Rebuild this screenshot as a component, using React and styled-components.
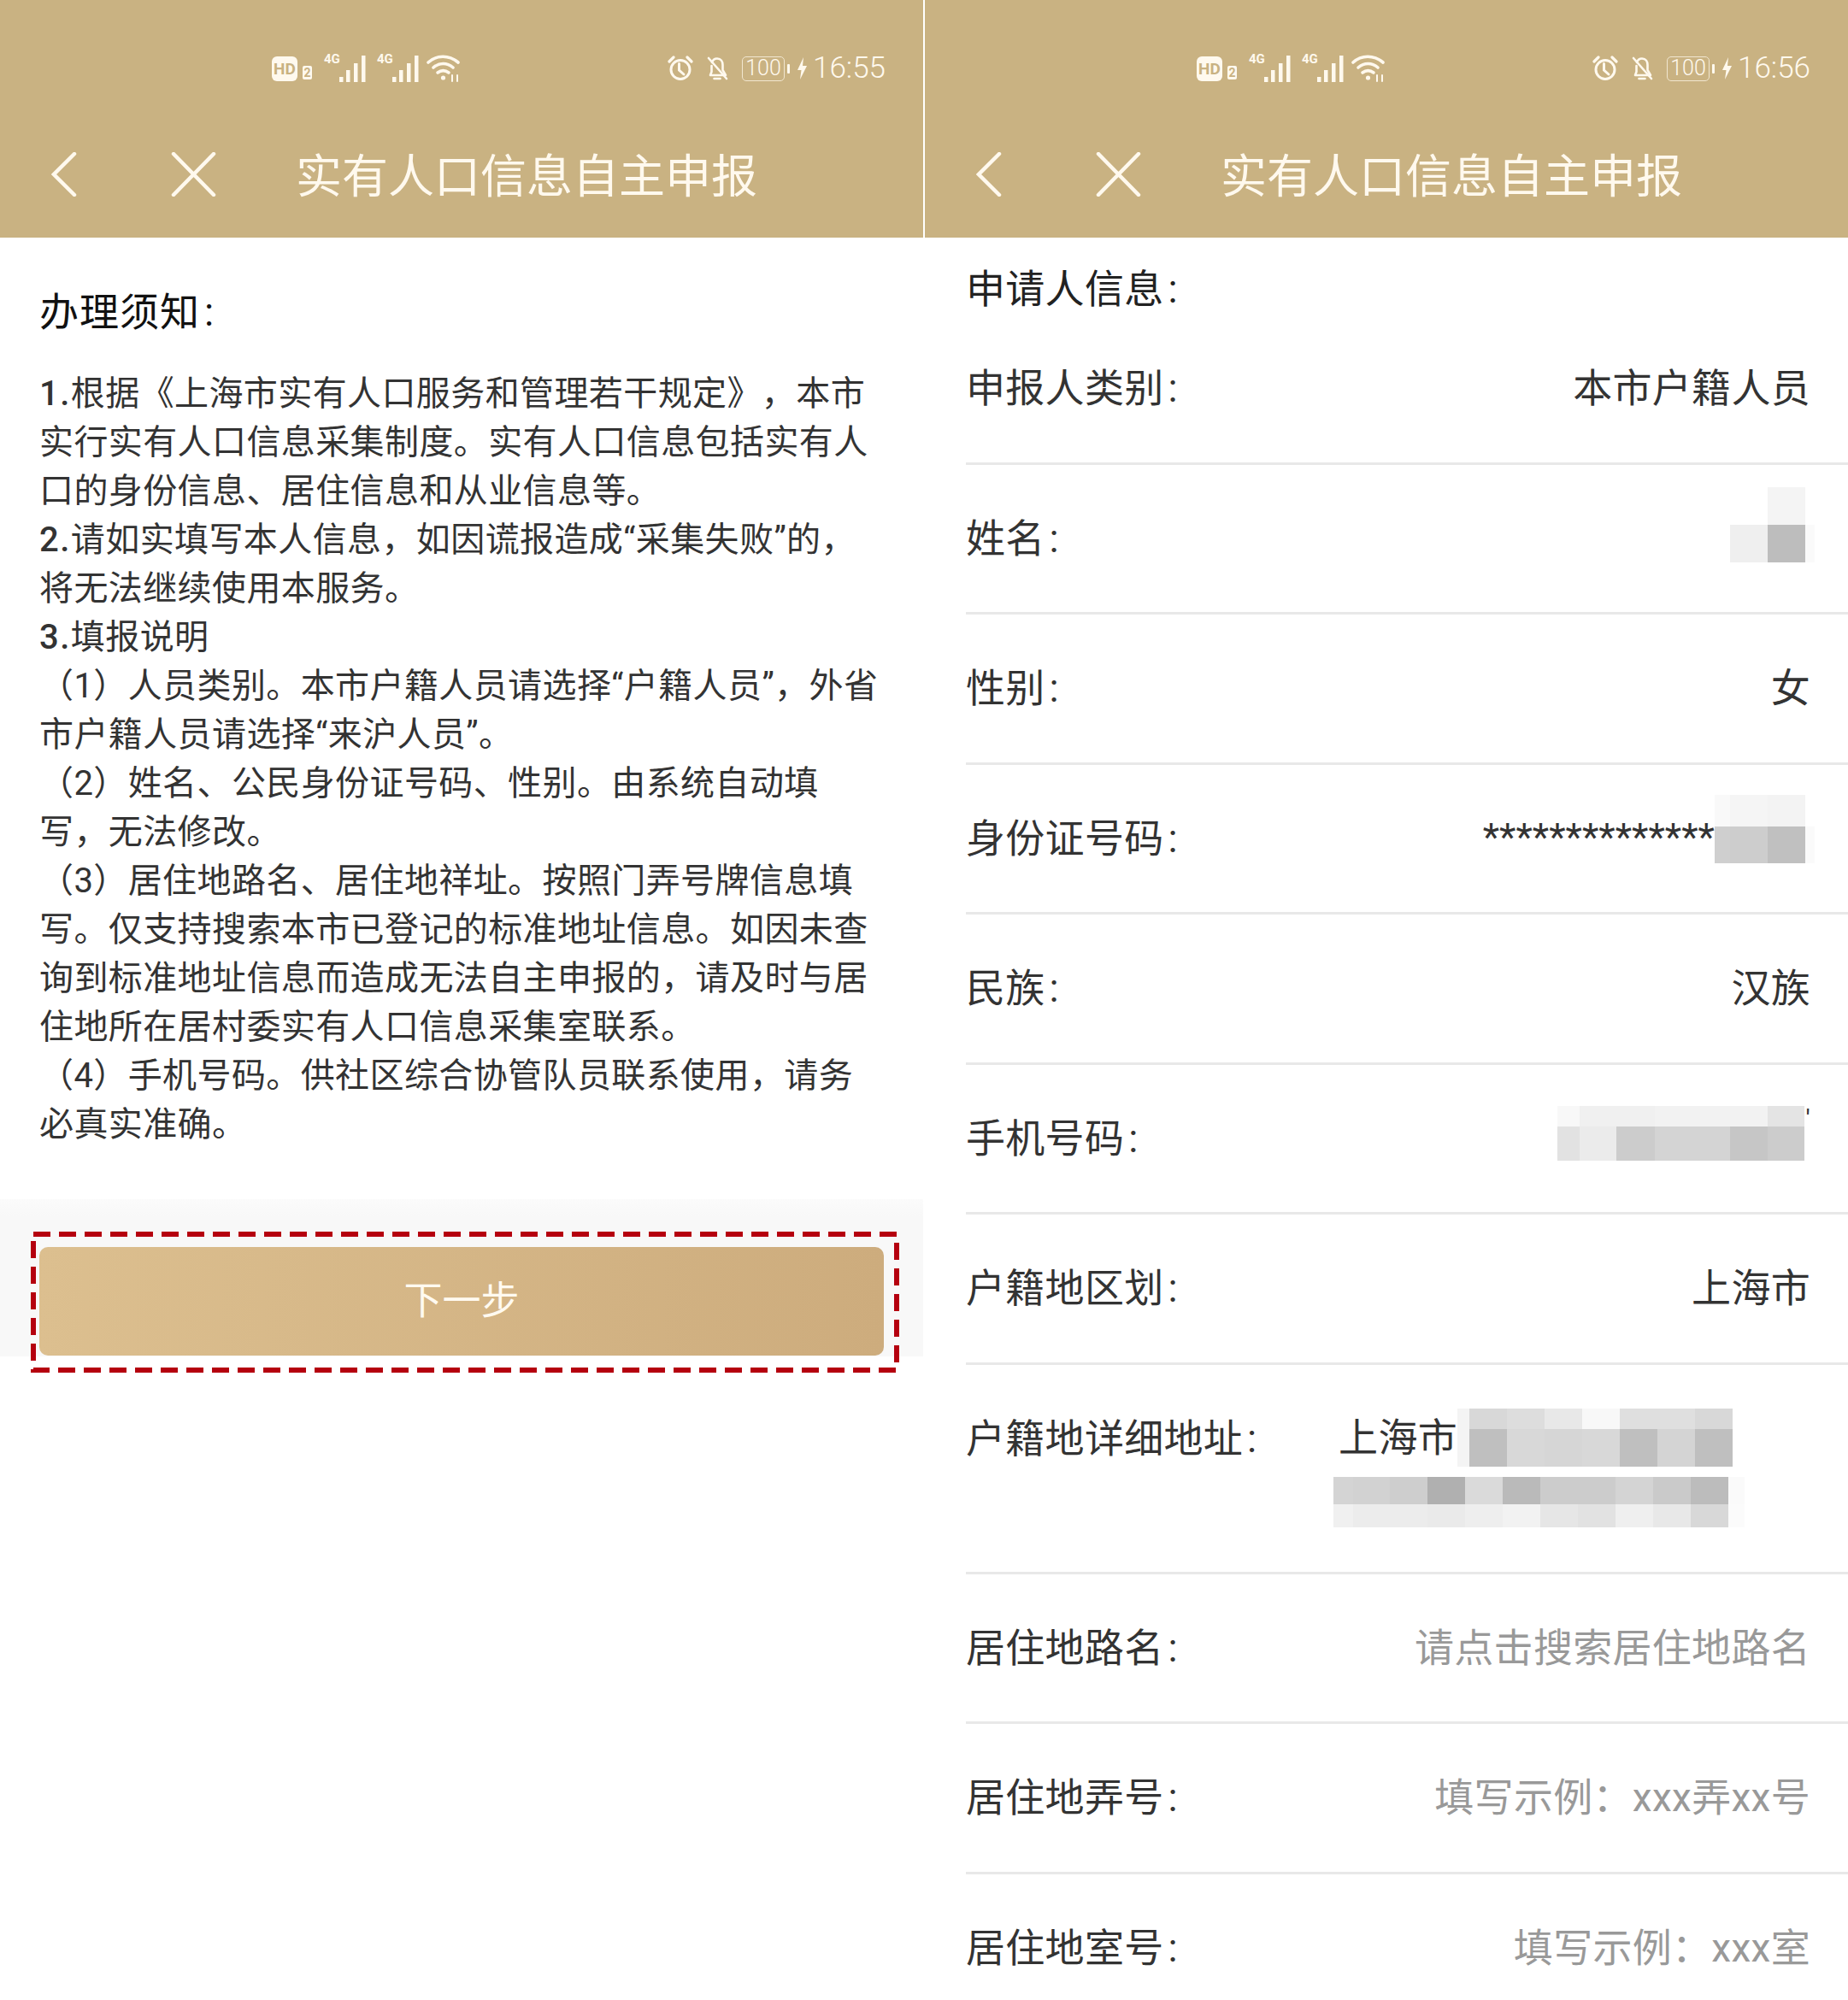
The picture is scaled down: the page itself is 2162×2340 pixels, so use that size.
import React from 'react'
import styled, { createGlobalStyle } from 'styled-components'

const GlobalStyle = createGlobalStyle`
html, body {
  margin: 0;
  padding: 0;
  background: #fff;
}
body {
  font-family: Roboto, "Noto Sans CJK SC", sans-serif;
  text-spacing-trim: space-all;
}
`

const Page = styled.div`
width: 2162px;
height: 2340px;
overflow: hidden;
display: flex;
gap: 2px;
background: #fff;
`

const Panel = styled.div`
width: 1080px;
height: 2340px;
display: flex;
flex-direction: column;
position: relative;
background: #fff;
`

const Header = styled.div`
height: 278px;
flex: none;
background: #c9b282;
color: #fff9ee;
display: flex;
flex-direction: column;
`

const StatusBar = styled.div`
height: 100px;
padding: 30px 44px 0 318px;
display: flex;
align-items: center;
justify-content: space-between;
`

const StatusGroup = styled.div`
display: flex;
align-items: center;
`

const HdBadge = styled.span`
width: 30px;
height: 29px;
border-radius: 6px;
background: #fff9ee;
color: #c9b282;
font: 700 19px/29px Roboto, sans-serif;
text-align: center;
`

const SimBadge = styled.span`
width: 11px;
height: 16px;
margin: 9px 14px 0 6px;
border-radius: 2px;
background: #fff9ee;
color: #c9b282;
font: 700 14px/16px Roboto, sans-serif;
text-align: center;
`

const Signal = styled.div`
position: relative;
width: 50px;
height: 32px;
margin-right: 12px;
display: flex;
justify-content: flex-end;
&:last-of-type {
  margin-right: 8px;
}
`

const NetLabel = styled.span`
position: absolute;
left: 0;
top: -3px;
font: 700 15px/16px Roboto, sans-serif;
`

const Battery = styled.div`
width: 50px;
height: 29px;
box-sizing: border-box;
margin-left: 14px;
border: 1.5px solid #f1e6cf;
border-radius: 5px;
font: 300 25px/26px Roboto, sans-serif;
text-align: center;
`

const BatteryNub = styled.span`
width: 3px;
height: 11px;
margin: 0 9px 0 3px;
border-radius: 1px;
background: #fff9ee;
`

const Time = styled.span`
margin-left: 7px;
font: 300 35px/40px Roboto, sans-serif;
`

const NavBar = styled.div`
height: 148px;
padding-left: 60px;
display: flex;
align-items: center;
`

const NavIcon = styled.svg`
display: block;
flex: none;
margin-right: ${({ $gap }) => $gap}px;
`

const Title = styled.div`
margin-top: 8px;
font-size: 54px;
line-height: 64px;
`

const Colon = styled.span`
margin-left: 5px;
`

const NoticeTitle = styled.div`
margin: 62px 0 0 46px;
font-size: 46px;
letter-spacing: 1px;
line-height: 50px;
color: #111;
`

const NoticeBody = styled.div`
margin: 42px 0 0 46px;
font-size: 40px;
letter-spacing: 0.4px;
line-height: 57px;
color: #333;
white-space: nowrap;
`

const NoticeLine = styled.div`
height: 57px;
`

const NoticeNumber = styled.span`
font-weight: 500;
letter-spacing: 1.5px;
`

const ActionZone = styled.div`
margin-top: 59px;
padding: 56px 46px 1px;
background: linear-gradient(#fbfbfb, #f8f8f8 20px);
position: relative;
`

const NextButton = styled.div`
height: 127px;
padding-bottom: 8px;
box-sizing: border-box;
border-radius: 10px;
background: linear-gradient(90deg, #dcbf8f, #cdac7d);
color: #fffaf0;
font-size: 45px;
display: flex;
align-items: center;
justify-content: center;
`

const Annotation = styled.svg`
position: absolute;
left: 36px;
top: 38px;
`

const SectionTitle = styled.div`
height: 64px;
padding: 30px 0 0 48px;
font-size: 46px;
letter-spacing: 0.3px;
line-height: 60px;
color: #222;
`

const Row = styled.div`
height: ${({ $tall }) => ($tall ? 245 : 175.5)}px;
box-sizing: border-box;
margin-left: 48px;
padding-right: 44px;
border-bottom: 3px solid #e8e8e8;
display: flex;
align-items: ${({ $tall }) => ($tall ? 'flex-start' : 'center')};
justify-content: space-between;
flex: none;
font-size: 46px;
letter-spacing: 0.3px;
line-height: 60px;
color: #333;
`

const Value = styled.div`
display: flex;
align-items: center;
white-space: nowrap;
color: ${({ $hint }) => ($hint ? '#999' : '#333')};
`

const Stars = styled.span`
margin-bottom: 2px;
letter-spacing: 0;
font-size: 45px;
white-space: nowrap;
`

const PhoneTick = styled.span`
position: absolute;
right: 0;
top: 0;
font-size: 30px;
line-height: 30px;
`

const PhoneValue = styled.div`
position: relative;
margin-bottom: 12px;
`

const AddressLabel = styled.div`
padding-top: 56px;
`

const AddressValue = styled.div`
padding: 51px 0 0 0;
margin-right: 91px;
display: flex;
flex-direction: column;
align-items: flex-start;
gap: 12px;
`

const AddressLine = styled.div`
display: flex;
align-items: center;
padding-left: 6px;
`

const AddressLineTwo = styled.div`
margin-right: -19px;
`

const MosaicGrid = styled.div`
display: grid;
grid-template-columns: ${({ $cols }) => $cols.map((c) => `${c}px`).join(' ')};
grid-template-rows: ${({ $rows }) => $rows.map((r) => `${r}px`).join(' ')};
margin: ${({ $margin }) => $margin || 0};
flex: none;
`

const MosaicCell = styled.div`
background: ${({ $tone }) => $tone};
`

const Mosaic = ({ cols, rows, tones, margin }) => (
  <MosaicGrid $cols={cols} $rows={rows} $margin={margin}>
    {tones.flat().map((tone, i) => (
      <MosaicCell key={i} $tone={tone} />
    ))}
  </MosaicGrid>
)

const noticeLines = [
  ['1.', '根据《上海市实有人口服务和管理若干规定》，本市'],
  ['', '实行实有人口信息采集制度。实有人口信息包括实有人'],
  ['', '口的身份信息、居住信息和从业信息等。'],
  ['2.', '请如实填写本人信息，如因谎报造成“采集失败”的，'],
  ['', '将无法继续使用本服务。'],
  ['3.', '填报说明'],
  ['', '（1）人员类别。本市户籍人员请选择“户籍人员”，外省'],
  ['', '市户籍人员请选择“来沪人员”。'],
  ['', '（2）姓名、公民身份证号码、性别。由系统自动填'],
  ['', '写，无法修改。'],
  ['', '（3）居住地路名、居住地祥址。按照门弄号牌信息填'],
  ['', '写。仅支持搜索本市已登记的标准地址信息。如因未查'],
  ['', '询到标准地址信息而造成无法自主申报的，请及时与居'],
  ['', '住地所在居村委实有人口信息采集室联系。'],
  ['', '（4）手机号码。供社区综合协管队员联系使用，请务'],
  ['', '必真实准确。'],
]

const SignalBars = () => (
  <svg width="32" height="32" viewBox="0 0 32 32" fill="#fff9ee">
    <rect x="0" y="26" width="4.5" height="6" />
    <rect x="8" y="18" width="4.5" height="14" />
    <rect x="17" y="10" width="4.5" height="22" />
    <rect x="26" y="1" width="4.5" height="31" />
  </svg>
)

const StatusIcons = ({ time }) => (
  <StatusBar>
    <StatusGroup>
      <HdBadge>HD</HdBadge>
      <SimBadge>2</SimBadge>
      <Signal>
        <NetLabel>4G</NetLabel>
        <SignalBars />
      </Signal>
      <Signal>
        <NetLabel>4G</NetLabel>
        <SignalBars />
      </Signal>
      <svg width="40" height="32" viewBox="0 0 40 32" fill="none" stroke="#fff9ee" strokeWidth="3.6" strokeLinecap="round">
        <path d="M2 9 C12 0 26 0 37 9" />
        <path d="M8 15 C15 9 24 9 31 15" />
        <path d="M13 21 C17 18 22 18 26 21" />
        <circle cx="19.5" cy="27" r="2.6" fill="#fff9ee" stroke="none" />
        <path d="M30 24 v7 M36 24 v7" strokeWidth="2" />
      </svg>
    </StatusGroup>
    <StatusGroup>
      <svg width="30" height="30" viewBox="0 0 30 30" fill="none" stroke="#fff9ee" strokeWidth="3" strokeLinecap="round">
        <circle cx="15" cy="16.5" r="11" />
        <path d="M13.5 9.5 V17 L19 22" />
        <path d="M2 7 L7 2 M23 2 L28 7" strokeWidth="3.2" />
      </svg>
      <svg width="30" height="30" viewBox="0 0 30 30" fill="none" stroke="#fff9ee" strokeWidth="2.6" strokeLinecap="round" strokeLinejoin="round" style={{ marginLeft: 13 }}>
        <path d="M9 8 C10 5 12 3.5 15 3.5 C19.5 3.5 21.5 7 21.5 11 V17 L25 23 H7 L8.5 19 V12" />
        <path d="M11.5 27 H18.5" />
        <path d="M5 3 L26 27" />
      </svg>
      <Battery>100</Battery>
      <BatteryNub />
      <svg width="11" height="26" viewBox="0 0 11 26" fill="#fff9ee">
        <path d="M7 0 L0 15 H4.5 L3 26 L11 10 H6 Z" />
      </svg>
      <Time>{time}</Time>
    </StatusGroup>
  </StatusBar>
)

const TopBar = ({ time }) => (
  <Header>
    <StatusIcons time={time} />
    <NavBar>
      <NavIcon $gap={110} width="30" height="52" viewBox="0 0 30 52" fill="none" stroke="#fff9ee" strokeWidth="4.5" strokeLinecap="round">
        <path d="M27 2 L3 26 L27 50" />
      </NavIcon>
      <NavIcon $gap={93} width="53" height="52" viewBox="0 0 53 52" fill="none" stroke="#fff9ee" strokeWidth="4.5" strokeLinecap="round">
        <path d="M3 2 L50 50 M50 2 L3 50" />
      </NavIcon>
      <Title>实有人口信息自主申报</Title>
    </NavBar>
  </Header>
)

const Field = ({ label, children }) => (
  <Row>
    <span>{label}<Colon>:</Colon></span>
    {children}
  </Row>
)

export default function App() {
  return (
    <Page lang="zh-CN">
      <GlobalStyle />
      <Panel>
        <TopBar time="16:55" />
        <NoticeTitle>办理须知<Colon>:</Colon></NoticeTitle>
        <NoticeBody>
          {noticeLines.map(([num, text]) => (
            <NoticeLine key={text}>
              {num && <NoticeNumber>{num}</NoticeNumber>}
              {text}
            </NoticeLine>
          ))}
        </NoticeBody>
        <ActionZone>
          <NextButton>下一步</NextButton>
          <Annotation width="1016" height="165" viewBox="0 0 1016 165" fill="none">
            <rect x="3" y="3" width="1010" height="159" stroke="#b5000f" strokeWidth="6" strokeDasharray="20 10" />
          </Annotation>
        </ActionZone>
      </Panel>
      <Panel>
        <TopBar time="16:56" />
        <SectionTitle>申请人信息<Colon>:</Colon></SectionTitle>
        <Field label="申报人类别">
          <Value>本市户籍人员</Value>
        </Field>
        <Field label="姓名">
          <Mosaic
            cols={[44, 44, 11]}
            rows={[44, 44]}
            margin="0 -5px 32px 0"
            tones={[
              ['#fff', '#f4f4f4', '#fff'],
              ['#efefef', '#bdbdbd', '#fafafa'],
            ]}
          />
        </Field>
        <Field label="性别">
          <Value>女</Value>
        </Field>
        <Field label="身份证号码">
          <Value>
            <Stars>**************</Stars>
            <Mosaic
              cols={[18, 44, 44, 11]}
              rows={[37, 43]}
              margin="0 -5px 22px 0"
              tones={[
                ['#f9f9f9', '#f5f5f5', '#f3f3f3', '#fff'],
                ['#cfcfcf', '#cdcdcd', '#c0c0c0', '#fafafa'],
              ]}
            />
          </Value>
        </Field>
        <Field label="民族">
          <Value>汉族</Value>
        </Field>
        <Field label="手机号码">
          <PhoneValue>
            <Mosaic
              cols={[26, 43, 45, 44, 44, 44, 43]}
              rows={[24, 40]}
              margin="0 7px 0 0"
              tones={[
                ['#f8f8f8', '#f0f0f0', '#f0f0f0', '#f2f2f2', '#f2f2f2', '#f2f2f2', '#e4e4e4'],
                ['#e2e2e2', '#ebebeb', '#cccccc', '#d4d4d4', '#d4d4d4', '#c6c6c6', '#cccccc'],
              ]}
            />
            <PhoneTick>'</PhoneTick>
          </PhoneValue>
        </Field>
        <Field label="户籍地区划">
          <Value>上海市</Value>
        </Field>
        <Row $tall>
          <AddressLabel>户籍地详细地址<Colon>:</Colon></AddressLabel>
          <AddressValue>
            <AddressLine>
              上海市
              <Mosaic
                cols={[14, 44, 44, 44, 44, 44, 44, 44]}
                rows={[24, 44]}
                tones={[
                  ['#f4f4f4', '#d8d8d8', '#dddddd', '#e8e8e8', '#f8f8f8', '#dfdfdf', '#dfdfdf', '#d8d8d8'],
                  ['#f4f4f4', '#bfbfbf', '#d8d8d8', '#d6d6d6', '#d8d8d8', '#bfbfbf', '#d4d4d4', '#bfbfbf'],
                ]}
              />
            </AddressLine>
            <AddressLineTwo>
              <Mosaic
                cols={[23, 43, 44, 44, 44, 44, 44, 44, 44, 44, 44, 19]}
                rows={[32, 27]}
                tones={[
                  ['#d4d4d4', '#d2d2d2', '#cecece', '#b0b0b0', '#dadada', '#bababa', '#cccccc', '#cccccc', '#d4d4d4', '#cacaca', '#bcbcbc', '#fafafa'],
                  ['#f0f0f0', '#ececec', '#ececec', '#eaeaea', '#eeeeee', '#f2f2f2', '#e6e6e6', '#e2e2e2', '#efefef', '#e8e8e8', '#d8d8d8', '#fbfbfb'],
                ]}
              />
            </AddressLineTwo>
          </AddressValue>
        </Row>
        <Field label="居住地路名">
          <Value $hint>请点击搜索居住地路名</Value>
        </Field>
        <Field label="居住地弄号">
          <Value $hint>填写示例：xxx弄xx号</Value>
        </Field>
        <Field label="居住地室号">
          <Value $hint>填写示例：xxx室</Value>
        </Field>
      </Panel>
    </Page>
  )
}
